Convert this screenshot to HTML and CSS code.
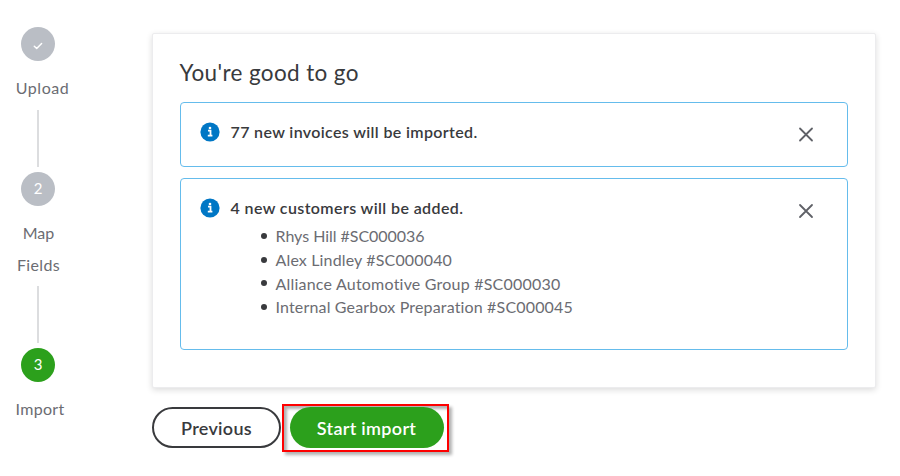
FILE: index.html
```html
<!DOCTYPE html>
<html lang="en">
<head>
<meta charset="utf-8">
<title>Import invoices</title>
<link rel="stylesheet" href="styles.css">
</head>
<body>
<div class="page">
  <nav class="steps">
    <div class="circle"><svg width="10" height="8" viewBox="0 0 10 8"><path d="M1.3 4.2 3.7 6.5 8.6 1.5" fill="none" stroke="#fff" stroke-width="1.5" stroke-linecap="round" stroke-linejoin="round"/></svg></div>
    <div class="label upload">Upload</div>
    <div class="line"></div>
    <div class="circle"><span>2</span></div>
    <div class="label"><span class="map">Map</span><br><span class="fields">Fields</span></div>
    <div class="line"></div>
    <div class="circle active"><span>3</span></div>
    <div class="label import">Import</div>
  </nav>
  <main>
    <section class="card">
      <h1>You're good to go</h1>
      <div class="alert first">
        <svg class="info" width="20" height="20" viewBox="0 0 20 20"><circle cx="10" cy="10" r="9.6" fill="#0077c5"/><path d="M8 8.7h2.5v5M7.8 13.7h4.6" fill="none" stroke="#fff" stroke-width="1.8"/><circle cx="10" cy="6" r="1.3" fill="#fff"/></svg>
        <div class="content"><h2 class="invoices">77 new invoices will be imported.</h2></div>
        <svg class="close" width="16" height="16" viewBox="0 0 16 16"><path d="M2 1.5l12 12M14 1.5L2 13.5" stroke="#5f6167" stroke-width="1.8" stroke-linecap="round"/></svg>
      </div>
      <div class="alert second">
        <svg class="info" width="20" height="20" viewBox="0 0 20 20"><circle cx="10" cy="10" r="9.6" fill="#0077c5"/><path d="M8 8.7h2.5v5M7.8 13.7h4.6" fill="none" stroke="#fff" stroke-width="1.8"/><circle cx="10" cy="6" r="1.3" fill="#fff"/></svg>
        <div class="content">
          <h2 class="customers">4 new customers will be added.</h2>
          <ul>
            <li class="rhys">Rhys Hill #SC000036</li>
            <li class="alex">Alex Lindley #SC000040</li>
            <li class="alliance">Alliance Automotive Group #SC000030</li>
            <li class="internal">Internal Gearbox Preparation #SC000045</li>
          </ul>
        </div>
        <svg class="close" width="16" height="16" viewBox="0 0 16 16"><path d="M2 2l12 12M14 2L2 14" stroke="#5f6167" stroke-width="1.8" stroke-linecap="round"/></svg>
      </div>
    </section>
    <div class="actions">
      <button class="previous">Previous</button>
      <div class="highlight"><button class="start">Start import</button></div>
    </div>
  </main>
</div>
</body>
</html>
```
FILE: styles.css
```css
* { box-sizing: border-box; }
body { margin: 0; background: #fff; font-family: Lato, "Liberation Sans", sans-serif; font-size: 16px; color: #393a3d; overflow: hidden; font-variant-ligatures: none; }
.page { display: flex; height: 476px; }
.steps { width: 77px; margin-right: 75px; padding-top: 27px; display: flex; flex-direction: column; align-items: center; flex: none; }
.circle { width: 34px; height: 34px; flex: none; border-radius: 50%; background: #babec5; color: #fff; display: flex; align-items: center; justify-content: center; font-size: 15px; padding-bottom: 2px; margin-right: 1px; }
.circle svg { margin-top: 5px; }
.active { background: #2ca01c; }
.label { line-height: 31.8px; margin-top: 11px; text-align: center; color: #6b6c72; white-space: nowrap; }
.upload { letter-spacing: .55px; padding-left: 8px; }
.fields { letter-spacing: .35px; }
.import { letter-spacing: .3px; padding-left: 3px; }
.line { width: 2px; height: 57px; margin: 6px 1px 5px 0; background: #dcdddf; flex: none; }
main { width: 724px; padding-top: 33px; }
.card { height: 355px; padding: 23px 27px 0 26.5px; background: #fff; border: 1px solid #ececee; border-radius: 2px; box-shadow: 0 2px 6px rgba(0,0,0,.14); }
h1 { margin: 0; font-size: 22.5px; line-height: 32px; font-weight: 400; letter-spacing: .37px; }
.alert { display: flex; align-items: flex-start; width: 668.5px; border: 1px solid #65bcec; border-radius: 4px; padding: 19px 33px 0 19.5px; }
.first { height: 65px; margin-top: 13px; }
.second { height: 172px; margin-top: 11px; }
.info { flex: none; }
.content { flex: 1; padding-left: 10.5px; }
.close { margin-top: 5px; flex: none; }
h2 { margin: -1px 0 0; font-size: 16px; line-height: 22px; font-weight: 600; }
.invoices { letter-spacing: .36px; }
.customers { letter-spacing: .39px; }
ul { margin: 5px 0 0; padding-left: 30px; list-style: none; }
li { display: flex; align-items: center; font-size: 16px; line-height: 23.8px; color: #6b6c72; }
li::before { content: ""; width: 6px; height: 6px; margin-right: 9px; border-radius: 50%; background: #393a3d; }
.rhys { letter-spacing: -.03px; }
.alex { letter-spacing: .15px; }
.alliance { letter-spacing: .21px; }
.internal { letter-spacing: .16px; }
.actions { display: flex; align-items: flex-start; margin-top: 16px; }
button { font: 600 18px Lato, sans-serif; letter-spacing: .3px; border-radius: 21px; height: 41px; padding: 0; }
.previous { width: 129px; margin-top: 3px; background: #fff; border: 2px solid #393a3d; color: #393a3d; }
.highlight { width: 167px; height: 48px; margin-left: 1px; border: 2px solid #fe0000; box-shadow: 3px 3px 3px rgba(0,0,0,.3), inset 3px 3px 3px rgba(0,0,0,.3); display: flex; align-items: center; justify-content: center; padding: 0 0 1px 2px; }
.start { width: 154px; background: #2ca01c; border: 0; color: #fff; }
```
